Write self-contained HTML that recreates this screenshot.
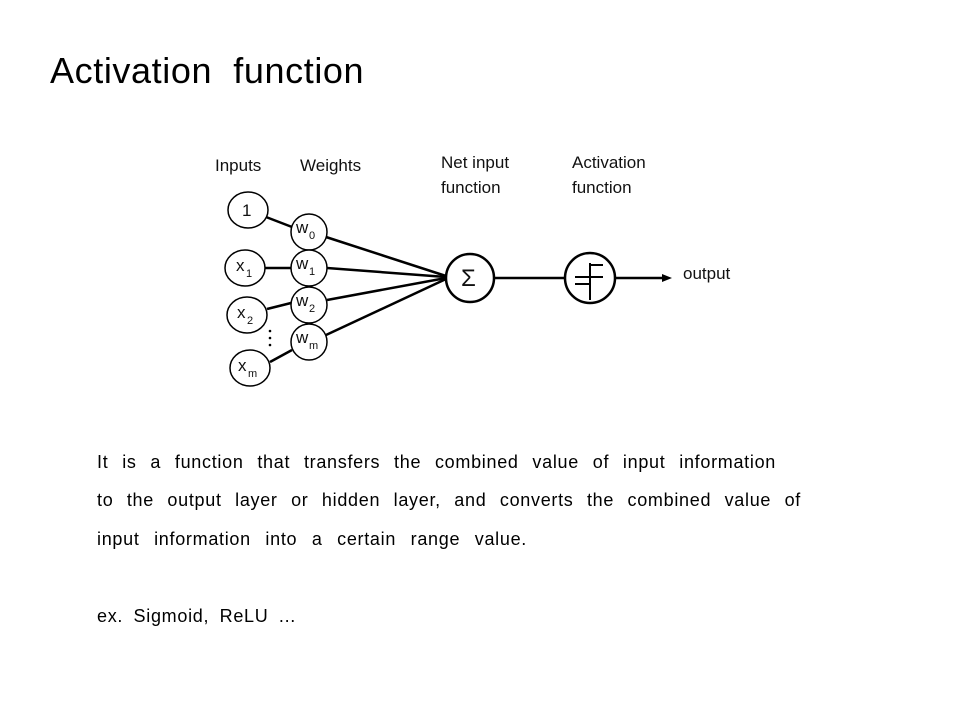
<!DOCTYPE html>
<html><head><style>
body{margin:0;width:960px;height:720px;background:#fff;position:relative;font-family:"Liberation Sans","Noto Sans CJK KR",sans-serif;color:#000;overflow:hidden}
.t{position:absolute;left:50px;top:50px;font-size:36px;white-space:nowrap;letter-spacing:0.6px}
.l{position:absolute;left:97px;font-size:18px;letter-spacing:0.7px;white-space:nowrap;text-align:justify;text-align-last:justify}
svg{position:absolute;left:0;top:0}
</style></head><body>
<div class="t">Activation&nbsp; function</div>
<svg width="960" height="720" font-family="Liberation Sans, sans-serif">
<g font-size="17" fill="#111">
<text x="215" y="171">Inputs</text>
<text x="300" y="171">Weights</text>
<text x="441" y="168">Net input</text>
<text x="441" y="193">function</text>
<text x="572" y="168">Activation</text>
<text x="572" y="193">function</text>
<text x="683" y="279">output</text>
</g>
<g stroke="#000" stroke-width="2.5" fill="none">
<line x1="266" y1="217" x2="292" y2="227"/>
<line x1="265" y1="268" x2="291" y2="268"/>
<line x1="267" y1="309" x2="291" y2="303"/>
<line x1="270" y1="362" x2="292" y2="350"/>
<line x1="326" y1="237" x2="446" y2="276"/>
<line x1="327" y1="268" x2="446" y2="277"/>
<line x1="327" y1="300" x2="446" y2="278"/>
<line x1="326" y1="335" x2="446" y2="279"/>
<line x1="495" y1="278" x2="565" y2="278"/>
<line x1="615" y1="278" x2="665" y2="278"/>
</g>
<polygon points="672,278 662,274 662,282" fill="#000"/>
<g stroke="#000" stroke-width="1.5" fill="#fff">
<ellipse cx="248" cy="210" rx="20" ry="18"/>
<ellipse cx="245" cy="268" rx="20" ry="18"/>
<ellipse cx="247" cy="315" rx="20" ry="18"/>
<ellipse cx="250" cy="368" rx="20" ry="18"/>
<circle cx="309" cy="232" r="18"/>
<circle cx="309" cy="268" r="18"/>
<circle cx="309" cy="305" r="18"/>
<circle cx="309" cy="342" r="18"/>
</g>
<g stroke="#000" stroke-width="2.5" fill="#fff">
<circle cx="470" cy="278" r="24"/>
<circle cx="590" cy="278" r="25"/>
</g>
<g stroke="#000" stroke-width="2" fill="none">
<path d="M590 263 V300 M589 265 H603 M575 277 H603 M575 284 H590"/>
</g>
<g font-size="17" fill="#111">
<text x="242" y="216">1</text>
<text x="236" y="271">x</text><text x="246" y="277" font-size="11">1</text>
<text x="237" y="318">x</text><text x="247" y="324" font-size="11">2</text>
<text x="238" y="371">x</text><text x="248" y="377" font-size="11">m</text>
<text x="296" y="233">w</text><text x="309" y="239" font-size="11">0</text>
<text x="296" y="269">w</text><text x="309" y="275" font-size="11">1</text>
<text x="296" y="306">w</text><text x="309" y="312" font-size="11">2</text>
<text x="296" y="343">w</text><text x="309" y="349" font-size="11">m</text>
<text x="461" y="286" font-size="24">Σ</text>
</g>
<g fill="#000"><circle cx="270" cy="331" r="1.3"/><circle cx="270" cy="338" r="1.3"/><circle cx="270" cy="345" r="1.3"/></g>
</svg>
<div class="l" style="top:452px;width:679px">It is a function that transfers the combined value of input information</div>
<div class="l" style="top:490px;width:704px">to the output layer or hidden layer, and converts the combined value of</div>
<div class="l" style="top:529px;width:430px">input information into a certain range value.</div>
<div class="l" style="top:606px;width:199px">ex. Sigmoid, ReLU ...</div>
</body></html>
